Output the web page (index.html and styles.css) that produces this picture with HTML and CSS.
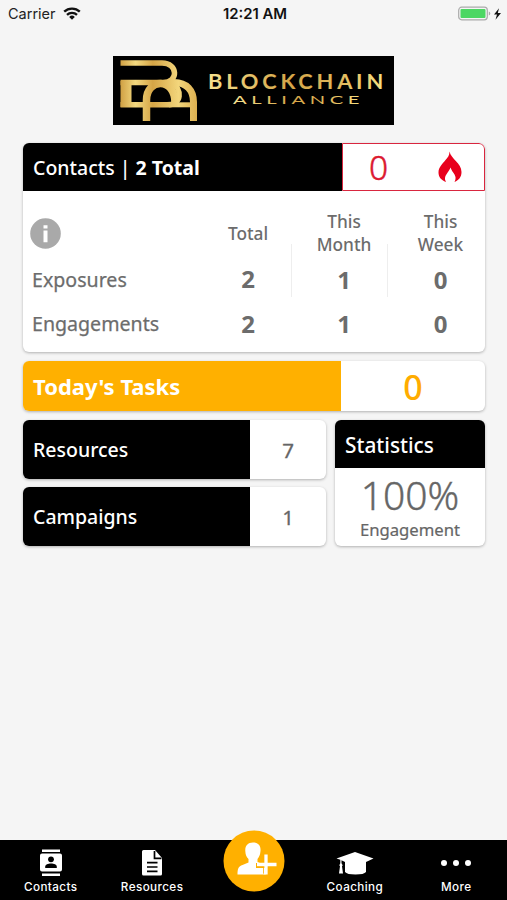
FILE: index.html
```html
<!DOCTYPE html>
<html lang="en">
<head>
<meta charset="utf-8">
<title>Blockchain Alliance</title>
<link rel="stylesheet" href="styles.css">
</head>
<body>
<div class="app">
  <header class="status">
    <div class="carrier"><span>Carrier</span>
      <svg width="18" height="13" viewBox="0 0 18 13" fill="none" stroke="#111" stroke-width="2.3"><path d="M1.2 4.7a11.2 11.2 0 0 1 15.6 0M4 7.8a7.2 7.2 0 0 1 10 0"/><path d="M9 12.7 6.2 9.9a4 4 0 0 1 5.6 0z" fill="#111" stroke="none"/></svg>
    </div>
    <div class="clock">12:21 AM</div>
    <div class="power">
      <svg width="44" height="16" viewBox="0 0 44 16"><rect x=".7" y="1.2" width="28.6" height="12.6" rx="3" fill="#f5f5f5" stroke="#aaa" stroke-width="1.2"/><rect x="2.5" y="3" width="25" height="9" rx="1" fill="#4cd763"/><path d="M30.8 5.500v4q1.5-.5 1.5-2t-1.5-2z" fill="#aaa"/><path d="M41 2.300 36 8.500h3l-1.5 5.2L43 7.100h-3.2z" fill="#111"/></svg>
    </div>
  </header>

  <svg class="logo" viewBox="0 0 281 69">
    <defs><linearGradient id="gold" gradientUnits="userSpaceOnUse" x1="7" y1="0" x2="85" y2="0"><stop offset="0" stop-color="#cf9f42"/><stop offset=".2" stop-color="#f3d980"/><stop offset=".42" stop-color="#d5a546"/><stop offset=".75" stop-color="#f3d67c"/><stop offset="1" stop-color="#dcae4e"/></linearGradient>
    <linearGradient id="goldText"><stop offset="0" stop-color="#f6e28f"/><stop offset=".45" stop-color="#d5a548"/><stop offset=".75" stop-color="#e2bb5e"/><stop offset="1" stop-color="#f8e486"/></linearGradient></defs>
    <rect width="281" height="69" fill="#000"/>
    <g fill="none" stroke="url(#gold)">
      <path d="M7.500 7H49C65 7 66 26.500 50 26.500H7.500M7.500 48.800H54C69 48.800 70 33 58 26" stroke-width="5.500"/>
      <path d="M13 25V51" stroke-width="11"/>
      <path d="M33.500 65V44C33.500 22 62 21 62 47" stroke-width="7.500"/>
      <path d="M60 26.500C74 26 80.500 35 80.500 46V65" stroke-width="7"/>
      <path d="M56 48.800H80" stroke-width="5"/>
    </g>
    <g fill="url(#goldText)" font-family="Lato, sans-serif">
      <text x="95" y="33" font-size="20" font-weight="700" textLength="179" lengthAdjust="spacingAndGlyphs" letter-spacing="3.500">BLOCKCHAIN</text>
      <text x="120" y="48" font-size="11" textLength="131" lengthAdjust="spacingAndGlyphs" letter-spacing="2.500">ALLIANCE</text>
    </g>
  </svg>

  <main>
    <section class="card contacts">
      <div class="contacts-head">
        <h2>Contacts | <b>2 Total</b></h2>
        <div class="hot"><span>0</span>
          <svg width="24" height="32" viewBox="0 0 24 32"><path d="M11.500 .5C13 8 23.500 12 23.500 21C23.500 26 21 29 16.500 31C20 24.500 14.500 22.500 12.500 16.500C11 21.500 4.500 25 8 31C3 29 .5 26 .5 21.500C.5 16 4.500 13 7.500 9C10 6.500 11.500 4 11.500 .5Z" fill="#e8001c"/></svg>
        </div>
      </div>
      <div class="table">
        <div class="info"><svg width="31" height="31" viewBox="0 0 31 31"><circle cx="15.500" cy="15.500" r="15.300" fill="#a9a9a9"/><path d="M13.500 7.200h4v3.300h-4zM13.500 12.500h4v11.700h-4z" fill="#fff"/></svg></div>
        <div class="cell th">Total</div><div class="cell th rule">This<br>Month</div><div class="cell th rule">This<br>Week</div>
        <div class="label">Exposures</div><div class="cell up">2</div><div class="cell">1</div><div class="cell">0</div>
        <div class="label">Engagements</div><div class="cell">2</div><div class="cell">1</div><div class="cell">0</div>
      </div>
    </section>

    <section class="card tasks"><h2>Today's Tasks</h2><span>0</span></section>

    <div class="lower">
      <div class="stack">
        <section class="card tile"><h2>Resources</h2><span>7</span></section>
        <section class="card tile"><h2>Campaigns</h2><span>1</span></section>
      </div>
      <section class="card stats"><h2>Statistics</h2><strong>100%</strong><small>Engagement</small></section>
    </div>
  </main>

  <nav class="tabs">
    <a><svg width="24" height="28" viewBox="0 0 24 28"><path fill="#fff" d="M3 .5h18v2.500H3zM3 24.500h18v2.500H3zM3 4.500h18a2 2 0 0 1 2 2v14a2 2 0 0 1-2 2H3a2 2 0 0 1-2-2v-14a2 2 0 0 1 2-2z"/><circle cx="12" cy="10.300" r="2.900"/><path d="M6.200 19v-1.300c0-4.300 11.600-4.300 11.600 0V19z"/></svg><span>Contacts</span></a>
    <a><svg width="24" height="28" viewBox="0 0 24 28"><path fill="#fff" d="M3.500 1H15l7 8v16a1.500 1.500 0 0 1-1.500 1.500h-17A1.500 1.500 0 0 1 2 25V2.500A1.500 1.500 0 0 1 3.500 1z"/><path d="M14.500 2v7.300h7M7 13.700h10.500M7 18h10.500M7 22.400h10.500" fill="none" stroke="#000" stroke-width="1.700"/></svg><span>Resources</span></a>
    <a class="add"><svg width="62" height="62" viewBox="0 0 62 62"><circle cx="31" cy="31" r="30.500" fill="#ffb000"/><path fill="#fff" d="M30 12.500c5.500 0 8 3.500 7.500 8.500-.3 4-1.500 6-3 8v3l8 3.500v9H14.500c0-6 1-8 5-9.500l6-2.500V29c-2-2-3-4-3.200-8-.3-5 2.200-8.500 7.700-8.500z"/><path d="M43 24v13M33 35.500h10" fill="none" stroke="#ffb000" stroke-width="5"/><path d="M43 24.500v20M34 34.500h19.500" fill="none" stroke="#fff" stroke-width="3.300"/><path d="M33.500 37.200h7v6.500" fill="none" stroke="#ffb000" stroke-width=".8"/></svg></a>
    <a><svg width="38" height="28" viewBox="0 0 38 28"><path fill="#fff" d="M19 3 37.500 9.500l-7.500 3.500v10q-2 2.500-10.500 2.500T9 23V13l-3.500-1.700v3l1.200 2-.7 1 1 7.200H3l1-7.200-.7-1 1-2v-3.500L.5 9.500z"/></svg><span>Coaching</span></a>
    <a><svg width="32" height="28" viewBox="0 0 32 28"><g fill="#fff"><circle cx="4" cy="14" r="3"/><circle cx="16" cy="14" r="3"/><circle cx="28" cy="14" r="3"/></g></svg><span>More</span></a>
  </nav>
</div>
</body>
</html>
```

FILE: styles.css
```css
* { box-sizing: border-box; }
body { margin: 0; background: #f5f5f5; color: #666; font-family: "Noto Sans", "Open Sans", sans-serif; }
h2 { margin: 0; color: #fff; font-size: 19.5px; font-weight: 500; }
svg { display: block; flex: none; }
.app { height: 900px; display: flex; flex-direction: column; overflow: hidden; }

.status { height: 27px; padding: 0 5px 0 8px; display: grid; grid-template-columns: 1fr auto 1fr; align-items: center; font: 14.5px Inter, sans-serif; color: #222; }
.carrier { display: flex; align-items: center; gap: 7px; }
.clock { font-size: 14.9px; font-weight: 600; color: #111; }
.power { display: flex; justify-content: flex-end; }

.logo { width: 281px; height: 69px; margin: 29px 0 0 113px; }

main { margin: 18px 22px 0 23px; display: flex; flex-direction: column; gap: 9px; flex: 1; }
.card { background: #fff; border-radius: 6px; box-shadow: 0 1px 3px rgba(0, 0, 0, .28); overflow: hidden; }
.card h2 { background: #000; padding-left: 10px; display: flex; align-items: center; white-space: pre; }

.contacts { height: 209px; color: #6c6c6c; }
.contacts-head { height: 48px; display: grid; grid-template-columns: 319px 1fr; }
.hot { border: 1.5px solid #d9263f; border-radius: 0 6px 0 0; display: flex; align-items: center; justify-content: space-between; padding: 0 22px 0 26px; color: #dc1830; font-size: 33.5px; font-weight: 300; line-height: 1; -webkit-text-stroke: .5px; }
.hot span { position: relative; top: 1px; }
.table { padding-top: 18px; display: grid; grid-template-columns: 173px 96px 96px 97px; grid-template-rows: 48px 45px 43px; align-items: center; }
.info { padding-left: 7px; }
.label { padding-left: 9px; font-size: 19.6px; -webkit-text-stroke: .25px; }
.cell { padding-left: 8px; text-align: center; font-size: 24px; font-weight: 700; position: relative; }
.th { font-size: 17.3px; line-height: 23px; font-weight: 500; }
.up { top: -1px; }
.rule::before { content: ""; position: absolute; left: -1px; top: 34px; width: 1px; height: 53px; background: #eee; }

.tasks { height: 50px; display: grid; grid-template-columns: 318px 1fr; }
.tasks h2 { background: #ffb000; font-size: 22px; font-weight: 700; }
.tasks span { display: flex; align-items: center; justify-content: center; font-size: 34px; font-weight: 500; color: #ffac00; line-height: 1; padding-top: 1px; }

.lower { display: grid; grid-template-columns: 303px 150px; gap: 9px; height: 126px; }
.stack { display: grid; grid-template-rows: 1fr 1fr; gap: 8px; }
.tile { display: grid; grid-template-columns: 227px 1fr; }
.tile span { display: flex; align-items: center; justify-content: center; font-size: 20.5px; padding-top: 1px; -webkit-text-stroke: .3px; }
.stats { display: flex; flex-direction: column; text-align: center; }
.stats h2 { height: 48px; font-size: 20.8px; padding-top: 2px; }
.stats strong { font-size: 39px; line-height: 53px; font-weight: 300; -webkit-text-stroke: .4px; }
.stats small { font-size: 16.7px; line-height: 17px; -webkit-text-stroke: .2px; }

.tabs { height: 60px; background: #000; display: grid; grid-template-columns: repeat(5, 1fr); color: #fff; font: 500 11.7px Inter, sans-serif; letter-spacing: .4px; }
.tabs a { display: flex; flex-direction: column; align-items: center; padding-top: 9px; gap: 3px; }
.tabs .add { padding: 0 0 0 1px; margin-top: -10px; }
```
